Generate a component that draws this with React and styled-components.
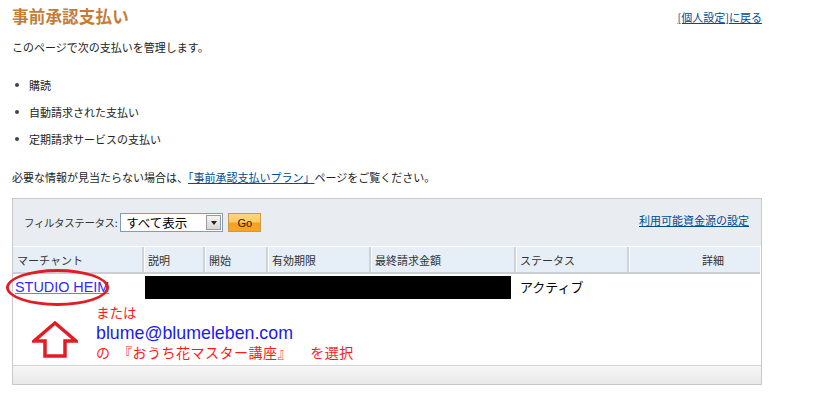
import styled, { createGlobalStyle } from 'styled-components';

const GlobalStyle = createGlobalStyle`
  html, body {
    margin: 0;
    padding: 0;
    background: #fff;
  }
  body {
    font-family: "Noto Sans CJK JP", "Liberation Sans", sans-serif;
    font-size: 11px;
    color: #222;
  }
`;

// column widths of the payment table (merchant .. details)
const COLUMNS = '129px 61px 63px 103px 145px 113px 1fr';

const Page = styled.div`
  width: 750px;
  margin-left: 12px;
  padding-top: 4px;
`;

const TitleRow = styled.div`
  display: flex;
  justify-content: space-between;
  align-items: flex-start;
  height: 26px;
`;

const Title = styled.h1`
  margin: 0;
  font-size: 16.5px;
  font-weight: bold;
  line-height: 24px;
  color: #c47c36;
  letter-spacing: 0.2px;
`;

const Link = styled.a`
  color: #004b91;
  text-decoration: underline;
  font-size: 11px;
  line-height: 14px;
  cursor: pointer;
`;

const BackLink = styled(Link)`
  margin-top: 6px;
`;

const Intro = styled.p`
  margin: 10px 0 0;
  line-height: 14px;
`;

const List = styled.ul`
  margin: 24px 0 0;
  padding: 0 0 0 17px;
  list-style: none;
`;

const Item = styled.li`
  position: relative;
  line-height: 14px;
  height: 27px;

  &::before {
    content: '';
    position: absolute;
    left: -14px;
    top: 5px;
    width: 4px;
    height: 4px;
    border-radius: 50%;
    background: #444;
  }
`;

const Note = styled.p`
  margin: 11px 0 0;
  line-height: 14px;
`;

const Box = styled.div`
  margin-top: 14px;
  border: 1px solid #c9c9c9;
  width: 748px;
`;

const FilterBar = styled.div`
  display: flex;
  align-items: center;
  height: 47px;
  padding: 0 11px;
  background: #e9edf2;
  border-bottom: 1px solid #fff;
`;

const FilterLabel = styled.span`
  color: #333;
  font-size: 10.5px;
  letter-spacing: -0.4px;
  margin-right: 3px;
`;

const Select = styled.div`
  display: flex;
  align-items: center;
  box-sizing: border-box;
  width: 103px;
  height: 19px;
  border: 1px solid #7f9db9;
  background: #fff;
  padding: 1px;
`;

const SelectText = styled.span`
  flex: 1;
  padding-left: 4px;
  font-size: 12.5px;
  color: #000;
  line-height: 15px;
`;

const SelectArrow = styled.span`
  box-sizing: border-box;
  width: 15px;
  height: 15px;
  border: 1px solid #9a9a9a;
  background: linear-gradient(#f4f4f4, #d6d6d6);
  display: flex;
  align-items: center;
  justify-content: center;

  &::after {
    content: '';
    border-left: 3.5px solid transparent;
    border-right: 3.5px solid transparent;
    border-top: 4px solid #222;
  }
`;

const GoButton = styled.button`
  box-sizing: border-box;
  margin-left: 5px;
  width: 33px;
  height: 19px;
  padding: 0;
  border: 1px solid #c99a4a;
  background: linear-gradient(#ffd582 0%, #ffcb66 45%, #f7a21d 55%, #f8a523 100%);
  font-family: "Liberation Sans", Arial, sans-serif;
  font-size: 11px;
  color: #222;
`;

const FundsLink = styled(Link)`
  margin-left: auto;
  margin-right: 1px;
  margin-bottom: 6px;
`;

const HeadRow = styled.div`
  display: grid;
  grid-template-columns: ${COLUMNS};
  height: 25px;
  background: #e6eef8;
  border-bottom: 2px solid #ccd0d4;
  margin-right: 1px;
`;

const HeadCell = styled.div`
  display: flex;
  align-items: center;
  justify-content: ${p => (p.$right ? 'flex-end' : 'flex-start')};
  padding: 0 ${p => (p.$right ? '36px' : '4px')} 0 4px;
  border-left: ${p => (p.$first ? 'none' : '2px solid #cfd3d8')};
  box-shadow: ${p => (p.$first ? 'none' : 'inset 1px 0 0 #fff')};
  color: #333;
  font-size: 11px;
`;

const Body = styled.div`
  height: 91px;
`;

const DataRow = styled.div`
  display: grid;
  grid-template-columns: ${COLUMNS};
  height: 29px;
`;

const MerchantCell = styled.div`
  position: relative;
  padding: 4px 0 0 2px;
`;

const MerchantLink = styled.a`
  font-family: "Liberation Sans", Arial, sans-serif;
  font-size: 14.4px;
  color: #2b2bff;
  text-decoration: underline;
  text-decoration-color: #7a7aff;
  line-height: 18px;
`;

const Circle = styled.span`
  position: absolute;
  left: -7px;
  top: -5px;
  width: 103px;
  height: 37px;
  box-sizing: border-box;
  border: 3px solid #e31b23;
  border-radius: 50%;
  pointer-events: none;
`;

const Redacted = styled.div`
  grid-column: 2 / 6;
  margin: 2px 3px 0;
  height: 23px;
  background: #000;
`;

const StatusCell = styled.div`
  padding: 5px 0 0 6px;
  font-size: 13px;
  color: #000;
  line-height: 16px;
`;

const Annotation = styled.div`
  display: flex;
  padding-left: 19px;
`;

const ArrowBox = styled.div`
  width: 64px;
  padding-top: 18px;
`;

const Notes = styled.div`
  display: flex;
  flex-direction: column;
  padding-top: 1px;
`;

const RedText = styled.span`
  color: #ff1a1a;
  font-size: ${p => (p.$wide ? '14px' : '13.5px')};
  letter-spacing: ${p => (p.$wide ? '0.5px' : '0')};
  line-height: 17px;
  white-space: pre;
`;

const Email = styled.span`
  font-family: "Liberation Sans", Arial, sans-serif;
  font-size: 17.8px;
  color: #1a1aee;
  line-height: 22px;
  margin-top: 1px;
`;

const Footer = styled.div`
  height: 18px;
  border-top: 1px solid #d6d6d6;
  background: linear-gradient(#f6f6f6, #e9e9e9);
`;

const headers = ['マーチャント', '説明', '開始', '有効期限', '最終請求金額', 'ステータス'];

export default function App() {
  return (
    <>
      <GlobalStyle />
      <Page>
        <TitleRow>
          <Title>事前承認支払い</Title>
          <BackLink>[個人設定]に戻る</BackLink>
        </TitleRow>
        <Intro>このページで次の支払いを管理します。</Intro>
        <List>
          <Item>購読</Item>
          <Item>自動請求された支払い</Item>
          <Item>定期請求サービスの支払い</Item>
        </List>
        <Note>
          必要な情報が見当たらない場合は、<Link>「事前承認支払いプラン」</Link>ページをご覧ください。
        </Note>

        <Box>
          <FilterBar>
            <FilterLabel>フィルタステータス:</FilterLabel>
            <Select>
              <SelectText>すべて表示</SelectText>
              <SelectArrow />
            </Select>
            <GoButton>Go</GoButton>
            <FundsLink>利用可能資金源の設定</FundsLink>
          </FilterBar>

          <HeadRow>
            {headers.map((h, i) => (
              <HeadCell key={h} $first={i === 0}>{h}</HeadCell>
            ))}
            <HeadCell $right>詳細</HeadCell>
          </HeadRow>

          <Body>
            <DataRow>
              <MerchantCell>
                <MerchantLink>STUDIO HEIM</MerchantLink>
                <Circle />
              </MerchantCell>
              <Redacted />
              <StatusCell>アクティブ</StatusCell>
              <div />
            </DataRow>
            <Annotation>
              <ArrowBox>
                <svg width="46" height="37" viewBox="0 0 46 37">
                  <path
                    d="M23 2 L44 20 L33 20 L33 35 L13 35 L13 20 L2 20 Z"
                    fill="none"
                    stroke="#e31b23"
                    strokeWidth="3.5"
                    strokeLinejoin="miter"
                  />
                </svg>
              </ArrowBox>
              <Notes>
                <RedText>または</RedText>
                <Email>blume@blumeleben.com</Email>
                <RedText $wide>{'の　『おうち花マスター講座』 　を選択'}</RedText>
              </Notes>
            </Annotation>
          </Body>

          <Footer />
        </Box>
      </Page>
    </>
  );
}
